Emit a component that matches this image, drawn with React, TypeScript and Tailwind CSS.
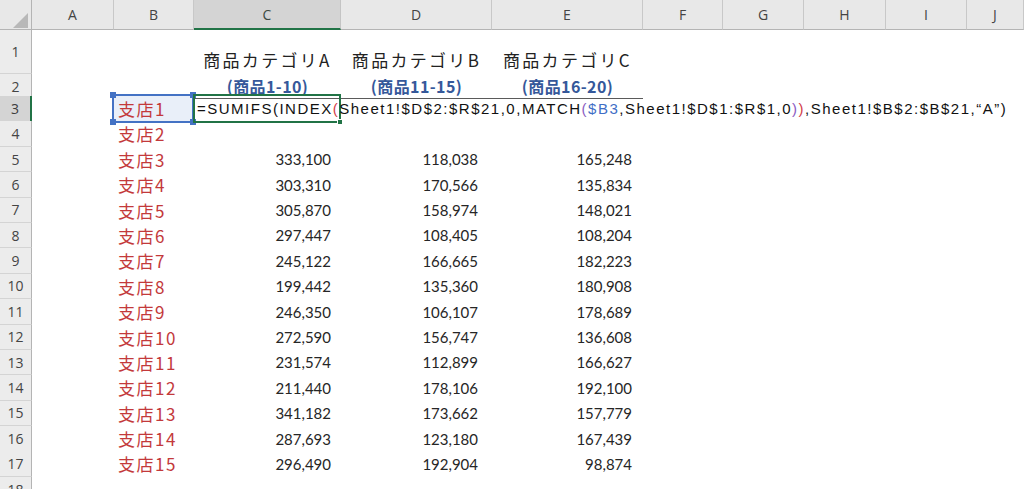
const cols =
  'grid grid-cols-[32px_82px_80px_147px_151px_151px_80px_81px_82px_81px_57px]';

const letters = ['A', 'B', 'C', 'D', 'E', 'F', 'G', 'H', 'I', 'J'];

const data: [string, string, string][] = [
  ['333,100', '118,038', '165,248'],
  ['303,310', '170,566', '135,834'],
  ['305,870', '158,974', '148,021'],
  ['297,447', '108,405', '108,204'],
  ['245,122', '166,665', '182,223'],
  ['199,442', '135,360', '180,908'],
  ['246,350', '106,107', '178,689'],
  ['272,590', '156,747', '136,608'],
  ['231,574', '112,899', '166,627'],
  ['211,440', '178,106', '192,100'],
  ['341,182', '173,662', '157,779'],
  ['287,693', '123,180', '167,439'],
  ['296,490', '192,904', '98,874'],
];

const headFont = { fontFamily: '"Open Sans", "Liberation Sans", sans-serif' };
const jpFont = { fontFamily: '"Noto Sans CJK JP", "Noto Sans", sans-serif' };
const numFont = { fontFamily: 'Lato, "Liberation Sans", sans-serif' };
const fxFont = { fontFamily: '"Liberation Sans", Arial, sans-serif' };

function RowHead({ n, active }: { n: number; active?: boolean }) {
  return (
    <div
      style={headFont}
      className={
        active
          ? 'flex items-center justify-center bg-[#d4d4d4] border-b border-b-[#c8c8c8] border-r-2 border-r-[#217346] text-[14px] text-[#3d3d3d]'
          : 'flex items-center justify-center bg-[#ececec] border-b border-b-[#d4d4d4] border-r border-r-[#b4b4b4] text-[14px] text-[#444]'
      }
    >
      {n}
    </div>
  );
}

function Branch({ n }: { n: number }) {
  return (
    <div
      style={jpFont}
      className="flex items-center pl-[4px] text-[17px] tracking-[1.5px] text-[#c3393b]"
    >
      支店{n}
    </div>
  );
}

function Num({ v, pad }: { v: string; pad: string }) {
  return (
    <div
      style={numFont}
      className={`flex items-center justify-end text-[15px] text-[#262626] ${pad}`}
    >
      {v}
    </div>
  );
}

function Blank({ n }: { n: number }) {
  return (
    <>
      {Array.from({ length: n }).map((_, i) => (
        <div key={i} />
      ))}
    </>
  );
}

export default function App() {
  return (
    <div className="h-[489px] w-[1024px] overflow-hidden bg-white">
      {/* column headers */}
      <div className={`${cols} h-[30px]`}>
        <div className="relative bg-[#e8e8e8] border-b border-r border-[#b4b4b4]">
          <svg className="absolute left-[13px] top-[13px]" width="15" height="15" viewBox="0 0 15 15">
            <polygon points="15,0 15,15 0,15" fill="#b8b8b8" />
          </svg>
        </div>
        {letters.map((l) => (
          <div
            key={l}
            style={headFont}
            className={
              l === 'C'
                ? 'flex items-center justify-center bg-[#d4d4d4] border-b-2 border-b-[#217346] border-r border-r-[#c4c4c4] text-[14px] text-[#3d4a42]'
                : 'flex items-center justify-center bg-[#e8e8e8] border-b border-b-[#b4b4b4] border-r border-r-[#c8c8c8] text-[14px] text-[#444]'
            }
          >
            {l}
          </div>
        ))}
      </div>

      {/* row 1 */}
      <div className={`${cols} h-[44px]`}>
        <RowHead n={1} />
        <Blank n={2} />
        {['A', 'B', 'C'].map((c) => (
          <div
            key={c}
            style={jpFont}
            className="flex items-end justify-center pb-[2px] text-[17px] tracking-[2.3px] text-[#222]"
          >
            商品カテゴリ{c}
          </div>
        ))}
        <Blank n={5} />
      </div>

      {/* row 2 */}
      <div className={`${cols} h-[22px]`}>
        <RowHead n={2} />
        <Blank n={2} />
        {['1-10', '11-15', '16-20'].map((r) => (
          <div
            key={r}
            style={jpFont}
            className="flex items-center justify-center border-b border-[#5a5a5a] text-[16px] font-bold tracking-[0.4px] text-[#35589a]"
          >
            (商品{r})
          </div>
        ))}
        <Blank n={5} />
      </div>

      {/* row 3: editing */}
      <div className={`${cols} h-[25.4px]`}>
        <RowHead n={3} active />
        <div />
        <div className="relative">
          <div className="absolute -left-[2px] -top-[2px] -bottom-[1px] right-0 border-2 border-[#4472c4] bg-[#e9eff9]">
            <span className="absolute -left-[4px] -top-[4px] h-[6px] w-[6px] bg-[#4472c4]" />
            <span className="absolute -right-[4px] -top-[4px] h-[6px] w-[6px] bg-[#4472c4]" />
            <span className="absolute -left-[4px] -bottom-[4px] h-[6px] w-[6px] bg-[#4472c4]" />
            <span className="absolute -right-[4px] -bottom-[4px] h-[6px] w-[6px] bg-[#4472c4]" />
          </div>
          <div
            style={jpFont}
            className="relative flex h-full items-center pl-[4px] text-[17px] tracking-[1.5px] text-[#c3393b]"
          >
            支店1
          </div>
        </div>
        <div className="relative">
          <div className="absolute -left-[1px] -top-[2px] -bottom-[1px] right-0 border-2 border-[#217346]">
            <span className="absolute -right-[4px] -bottom-[4px] h-[6px] w-[6px] border border-white bg-[#217346]" />
          </div>
          <div
            style={fxFont}
            className="relative z-10 flex h-full items-center whitespace-nowrap pl-[3px] text-[15px] tracking-[1.5px] text-[#111]"
          >
            <span>=SUMIFS(INDEX</span>
            <span className="text-[#d2404a]">(</span>
            <span>Sheet1!$D$2:$R$21,0,MATCH</span>
            <span className="text-[#8a5cc2]">(</span>
            <span className="text-[#3f6ec6]">$B3</span>
            <span>,Sheet1!$D$1:$R$1,0</span>
            <span className="text-[#8a5cc2]">)</span>
            <span className="text-[#d2404a]">)</span>
            <span>,Sheet1!$B$2:$B$21,“A”)</span>
            <span className="ml-[1px] h-[20px] w-px bg-black" />
          </div>
        </div>
        <Blank n={7} />
      </div>

      {/* row 4 */}
      <div className={`${cols} h-[25.4px]`}>
        <RowHead n={4} />
        <div />
        <Branch n={2} />
        <Blank n={8} />
      </div>

      {data.map((d, i) => (
        <div key={i} className={`${cols} h-[25.4px]`}>
          <RowHead n={i + 5} />
          <div />
          <Branch n={i + 3} />
          <Num v={d[0]} pad="pr-[10px]" />
          <Num v={d[1]} pad="pr-[14px]" />
          <Num v={d[2]} pad="pr-[11px]" />
          <Blank n={5} />
        </div>
      ))}

      {/* row 18 */}
      <div className={`${cols} h-[25.4px]`}>
        <RowHead n={18} />
        <Blank n={10} />
      </div>
    </div>
  );
}
